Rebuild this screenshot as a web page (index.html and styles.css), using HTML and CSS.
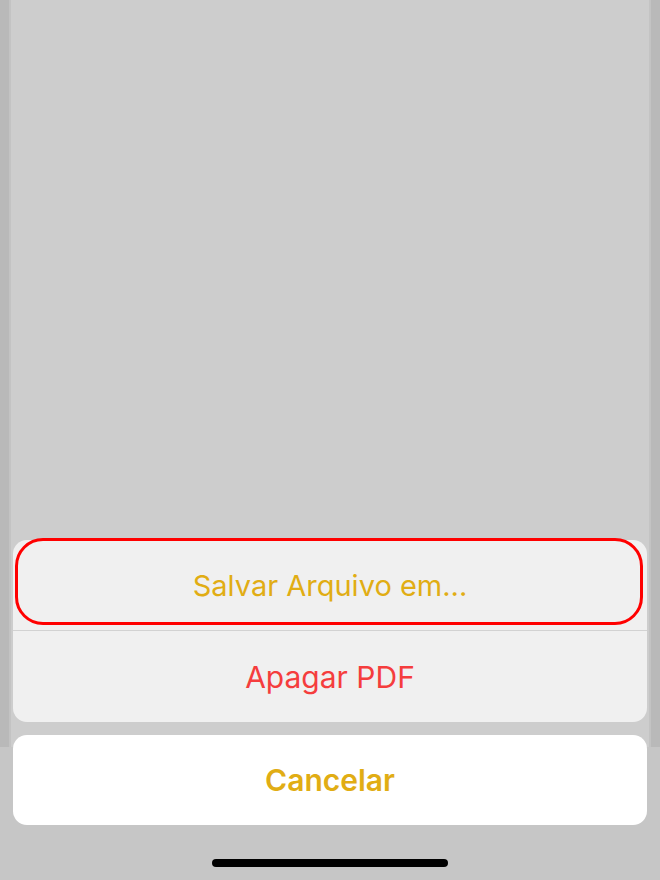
FILE: index.html
```html
<!DOCTYPE html>
<html lang="pt-BR">
<head>
    <meta charset="UTF-8">
    <meta name="viewport" content="width=device-width, initial-scale=1.0">
    <title>Salvar PDF</title>
    <link rel="stylesheet" href="styles.css">
</head>
<body>
    <!-- Presented screen behind the action sheet -->
    <div class="backdrop">
        <div class="screen"></div>
    </div>

    <div class="page">
        <!-- Action Sheet -->
        <div class="action-group">
            <button class="action action-save">Salvar Arquivo em...</button>
            <div class="separator"></div>
            <button class="action action-delete">Apagar PDF</button>
            <div class="highlight"></div>
        </div>

        <button class="action-cancel">Cancelar</button>

        <div class="home-indicator"></div>
    </div>
</body>
</html>
```

FILE: styles.css
```css
body {
    margin: 0;
    background-color: #c6c6c6;
    font-family: 'Inter', 'Liberation Sans', sans-serif;
}

.backdrop {
    position: absolute;
    top: 0;
    left: 0;
    right: 0;
    height: 747px;
    padding: 0 9px;
    background-color: #b9b9b9;
    box-sizing: border-box;
}

.screen {
    height: 100%;
    background-color: #cdcdcd;
    border-left: 2px solid #c3c3c3;
    border-right: 2px solid #c3c3c3;
}

.page {
    position: relative;
    height: 880px;
    display: flex;
    flex-direction: column;
    justify-content: flex-end;
    padding: 0 13px 13px;
    box-sizing: border-box;
}

.action-group {
    position: relative;
    background-color: #f0f0f0;
    border-radius: 14px;
    display: flex;
    flex-direction: column;
}

.action {
    height: 90px;
    border: none;
    background: none;
    font-family: inherit;
    font-size: 29px;
    cursor: pointer;
}

.action-delete {
    height: 91px;
    font-size: 30px;
    color: #f53d3d;
}

.action-save {
    color: #e1ad14;
}

.separator {
    height: 1px;
    background-color: #d2d2d2;
}

/* red outline drawn over the first option */
.highlight {
    position: absolute;
    top: -2px;
    left: 2px;
    width: 628px;
    height: 87px;
    border: 3px solid #ff0000;
    border-radius: 28px;
    box-sizing: border-box;
    pointer-events: none;
}

.action-cancel {
    margin-top: 13px;
    height: 90px;
    border: none;
    border-radius: 14px;
    background-color: #fff;
    color: #e1ad14;
    font-family: inherit;
    font-size: 30px;
    font-weight: 600;
    cursor: pointer;
}

.home-indicator {
    margin: 34px auto 0;
    width: 236px;
    height: 8px;
    border-radius: 4px;
    background-color: #000;
}
```
